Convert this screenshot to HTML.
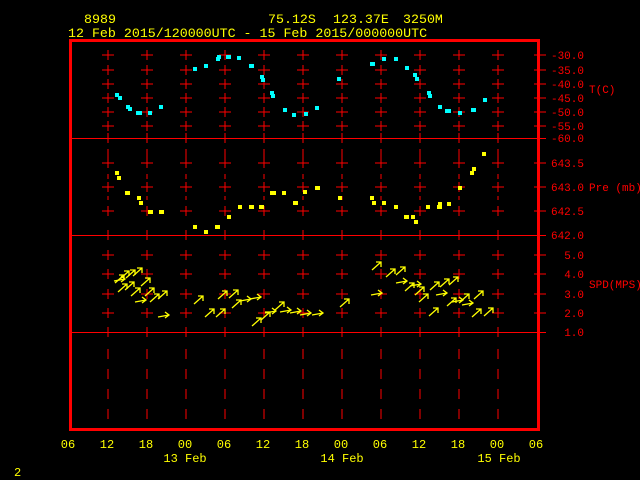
<!DOCTYPE html>
<html><head><meta charset="utf-8"><style>
html,body{margin:0;padding:0;background:#000;width:640px;height:480px;overflow:hidden}
svg{display:block}
text{font-family:"Liberation Mono",monospace}
.y{fill:#ff0}.r{fill:#f00}
</style></head><body>
<svg width="640" height="480" viewBox="0 0 640 480" xmlns="http://www.w3.org/2000/svg">
<defs>
<symbol id="ne" overflow="visible"><path d="M0,6 L9,-2 M4,-2 H9 V3" stroke="#ff0" stroke-width="1.3" fill="none"/></symbol>
<symbol id="ea" overflow="visible"><path d="M0,2 L11,0 M7,-3 L11,0 L7,3" stroke="#ff0" stroke-width="1.3" fill="none"/></symbol>
<g id="vcol">
<path d="M0,50 V60 M0,65 V75 M0,79 V89 M0,93 V103 M0,107 V117 M0,121 V131 M0,133 V143 M0,149 V159 M0,158 V168 M0,182 V192 M0,174 V179 M0,206 V216 M0,196 V200 M0,230 V240 M0,250 V260 M0,269 V279 M0,289 V299 M0,308 V318 M0,327 V337 M0,349 V359 M0,369 V379 M0,389 V399 M0,409 V419" stroke="#f00" stroke-width="1"/>
<path d="M-6,55 H6 M-6,70 H6 M-6,84 H6 M-6,98 H6 M-6,112 H6 M-6,126 H6 M-6,163 H6 M-6,187 H6 M-6,211 H6 M-6,255 H6 M-6,274 H6 M-6,294 H6 M-6,313 H6" stroke="#f00" stroke-width="1"/>
</g>
</defs>
<text x="84" y="23" class="y" font-size="13.3">8989</text>
<text x="268" y="23" class="y" font-size="13.3">75.12S</text>
<text x="333" y="23" class="y" font-size="13.3">123.37E</text>
<text x="403" y="23" class="y" font-size="13.3">3250M</text>
<text x="68" y="37" class="y" font-size="13.3">12 Feb 2015/120000UTC - 15 Feb 2015/000000UTC</text>
<g>
<use href="#vcol" x="108"/><use href="#vcol" x="147"/><use href="#vcol" x="186"/><use href="#vcol" x="225"/><use href="#vcol" x="264"/><use href="#vcol" x="303"/><use href="#vcol" x="342"/><use href="#vcol" x="381"/><use href="#vcol" x="420"/><use href="#vcol" x="459"/><use href="#vcol" x="498"/>
</g>
<path d="M70,138.5 H546 M70,235.5 H546 M70,332.5 H546" stroke="#f00" stroke-width="1"/>
<path d="M534,55 H546 M534,70 H546 M534,84 H546 M534,98 H546 M534,112 H546 M534,126 H546 M534,163 H546 M534,187 H546 M534,211 H546 M534,255 H546 M534,274 H546 M534,294 H546 M534,313 H546" stroke="#f00" stroke-width="1"/>
<rect x="70.5" y="40.5" width="468" height="389" fill="none" stroke="#f00" stroke-width="3"/>
<g class="r" font-size="11" text-anchor="end">
<text x="584" y="59">-30.0</text><text x="584" y="74">-35.0</text><text x="584" y="88">-40.0</text><text x="584" y="102">-45.0</text><text x="584" y="116">-50.0</text><text x="584" y="130">-55.0</text><text x="584" y="142">-60.0</text>
<text x="584" y="167">643.5</text><text x="584" y="191">643.0</text><text x="584" y="215">642.5</text><text x="584" y="239">642.0</text>
<text x="584" y="259">5.0</text><text x="584" y="278">4.0</text><text x="584" y="298">3.0</text><text x="584" y="317">2.0</text><text x="584" y="336">1.0</text>
</g>
<g class="r" font-size="11">
<text x="589" y="93">T(C)</text><text x="589" y="191">Pre (mb)</text><text x="589" y="288">SPD(MPS)</text>
</g>
<g class="y" font-size="12" text-anchor="middle">
<text x="68" y="448">06</text><text x="107" y="448">12</text><text x="146" y="448">18</text><text x="185" y="448">00</text><text x="224" y="448">06</text><text x="263" y="448">12</text><text x="302" y="448">18</text><text x="341" y="448">00</text><text x="380" y="448">06</text><text x="419" y="448">12</text><text x="458" y="448">18</text><text x="497" y="448">00</text><text x="536" y="448">06</text>
<text x="185" y="462">13 Feb</text><text x="342" y="462">14 Feb</text><text x="499" y="462">15 Feb</text>
</g>
<text x="14" y="476" class="y" font-size="12">2</text>
<g fill="#0ff">
<rect x="115" y="93" width="4" height="4"/><rect x="118" y="96" width="4" height="4"/><rect x="126" y="105" width="4" height="4"/><rect x="128" y="107" width="4" height="4"/><rect x="136" y="111" width="6" height="4"/><rect x="148" y="111" width="4" height="4"/><rect x="159" y="105" width="4" height="4"/>
<rect x="193" y="67" width="4" height="4"/><rect x="204" y="64" width="4" height="4"/><rect x="216" y="57" width="4" height="4"/><rect x="217" y="55" width="4" height="4"/><rect x="226" y="55" width="5" height="4"/><rect x="237" y="56" width="4" height="4"/><rect x="249" y="64" width="5" height="4"/><rect x="260" y="75" width="4" height="4"/><rect x="261" y="78" width="4" height="4"/><rect x="270" y="91" width="4" height="4"/><rect x="271" y="94" width="4" height="4"/><rect x="283" y="108" width="4" height="4"/><rect x="292" y="113" width="4" height="4"/><rect x="304" y="112" width="4" height="4"/><rect x="315" y="106" width="4" height="4"/>
<rect x="337" y="77" width="4" height="4"/><rect x="370" y="62" width="5" height="4"/><rect x="382" y="57" width="4" height="4"/><rect x="394" y="57" width="4" height="4"/><rect x="405" y="66" width="4" height="4"/><rect x="413" y="73" width="4" height="4"/><rect x="415" y="77" width="4" height="4"/><rect x="427" y="91" width="4" height="4"/><rect x="428" y="94" width="4" height="4"/><rect x="438" y="105" width="4" height="4"/><rect x="445" y="109" width="6" height="4"/><rect x="458" y="111" width="4" height="4"/><rect x="471" y="108" width="5" height="4"/><rect x="483" y="98" width="4" height="4"/>
</g>
<g fill="#ff0">
<rect x="115" y="171" width="4" height="4"/><rect x="117" y="176" width="4" height="4"/><rect x="125" y="191" width="5" height="4"/><rect x="137" y="196" width="4" height="4"/><rect x="139" y="201" width="4" height="4"/><rect x="148" y="210" width="5" height="4"/><rect x="159" y="210" width="5" height="4"/>
<rect x="193" y="225" width="4" height="4"/><rect x="204" y="230" width="4" height="4"/><rect x="215" y="225" width="5" height="4"/><rect x="227" y="215" width="4" height="4"/><rect x="238" y="205" width="4" height="4"/><rect x="249" y="205" width="5" height="4"/><rect x="259" y="205" width="5" height="4"/><rect x="270" y="191" width="6" height="4"/><rect x="282" y="191" width="4" height="4"/><rect x="293" y="201" width="5" height="4"/><rect x="303" y="190" width="4" height="4"/><rect x="315" y="186" width="5" height="4"/>
<rect x="338" y="196" width="4" height="4"/><rect x="370" y="196" width="4" height="4"/><rect x="372" y="201" width="4" height="4"/><rect x="382" y="201" width="4" height="4"/><rect x="394" y="205" width="4" height="4"/><rect x="404" y="215" width="5" height="4"/><rect x="411" y="215" width="4" height="4"/><rect x="414" y="220" width="4" height="4"/><rect x="426" y="205" width="4" height="4"/><rect x="437" y="205" width="5" height="4"/><rect x="438" y="202" width="4" height="4"/><rect x="447" y="202" width="4" height="4"/><rect x="458" y="186" width="4" height="4"/><rect x="470" y="171" width="4" height="4"/><rect x="472" y="167" width="4" height="4"/><rect x="482" y="152" width="4" height="4"/>
</g>
<g>
<use href="#ne" x="115" y="277"/><use href="#ne" x="120" y="273"/><use href="#ne" x="126" y="272"/><use href="#ne" x="133" y="270"/><use href="#ne" x="141" y="280"/><use href="#ne" x="118" y="286"/><use href="#ne" x="125" y="284"/><use href="#ne" x="131" y="290"/><use href="#ne" x="145" y="290"/><use href="#ne" x="150" y="296"/><use href="#ne" x="158" y="293"/><use href="#ne" x="194" y="298"/><use href="#ne" x="205" y="311"/><use href="#ne" x="218" y="293"/><use href="#ne" x="229" y="292"/><use href="#ne" x="216" y="311"/><use href="#ne" x="232" y="302"/><use href="#ne" x="252" y="320"/><use href="#ne" x="261" y="314"/><use href="#ne" x="275" y="304"/><use href="#ne" x="340" y="301"/><use href="#ne" x="372" y="264"/><use href="#ne" x="386" y="271"/><use href="#ne" x="396" y="269"/><use href="#ne" x="430" y="284"/><use href="#ne" x="440" y="281"/><use href="#ne" x="449" y="279"/><use href="#ne" x="460" y="296"/><use href="#ne" x="474" y="293"/><use href="#ne" x="472" y="311"/><use href="#ne" x="484" y="310"/><use href="#ne" x="415" y="289"/><use href="#ne" x="419" y="296"/><use href="#ne" x="429" y="310"/><use href="#ne" x="447" y="300"/><use href="#ne" x="405" y="285"/>
<use href="#ea" x="114" y="279"/><use href="#ea" x="135" y="300"/><use href="#ea" x="158" y="315"/><use href="#ea" x="240" y="299"/><use href="#ea" x="250" y="297"/><use href="#ea" x="265" y="311"/><use href="#ea" x="280" y="310"/><use href="#ea" x="290" y="311"/><use href="#ea" x="300" y="313"/><use href="#ea" x="312" y="313"/><use href="#ea" x="371" y="293"/><use href="#ea" x="396" y="281"/><use href="#ea" x="410" y="284"/><use href="#ea" x="436" y="293"/><use href="#ea" x="452" y="300"/><use href="#ea" x="462" y="303"/>
</g>
</svg>
</body></html>
